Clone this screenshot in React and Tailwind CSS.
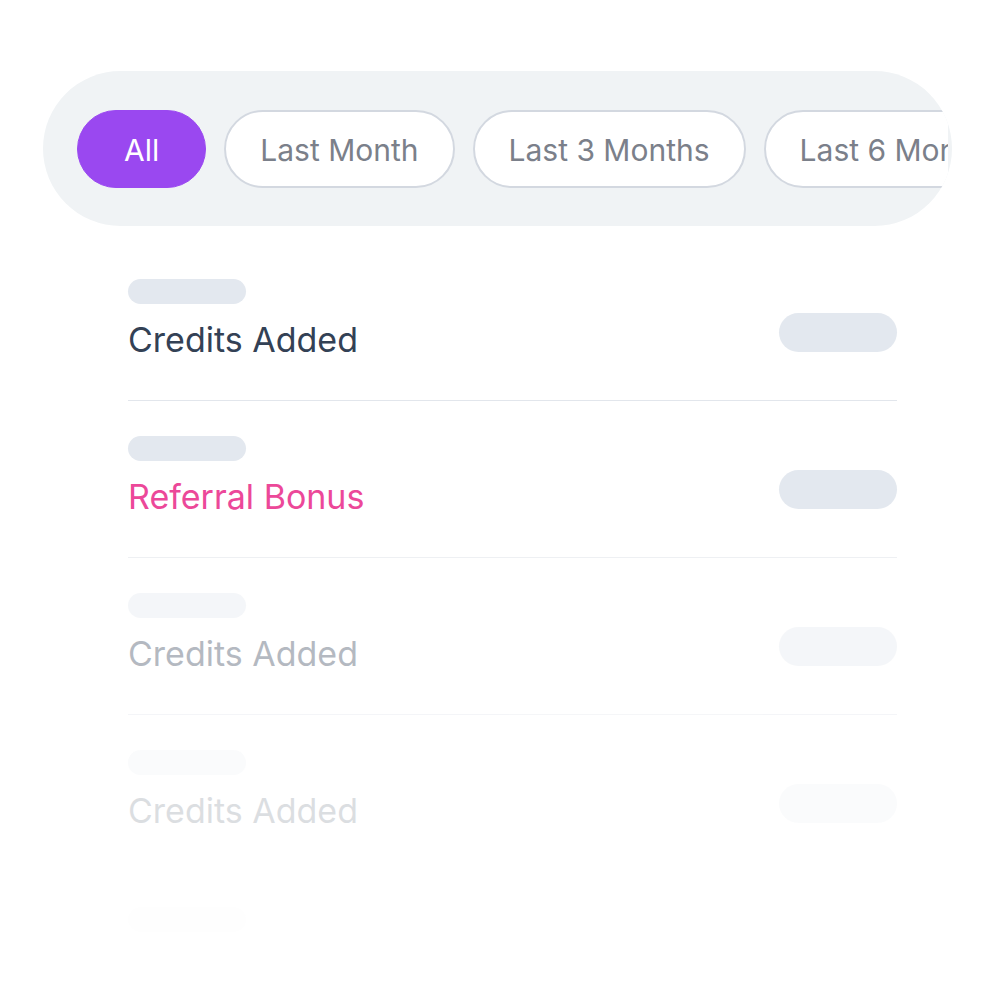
import React, { useState } from 'react';

const filters = ['All', 'Last Month', 'Last 3 Months', 'Last 6 Months'];

const rows = [
  { title: 'Credits Added', color: 'text-[#334155]', fade: 'opacity-100', line: 'border-[#e2e6ec]' },
  { title: 'Referral Bonus', color: 'text-[#ec4899]', fade: 'opacity-100', line: 'border-[#eef0f3]' },
  { title: 'Credits Added', color: 'text-[#334155]', fade: 'opacity-[0.36]', line: 'border-[#e2e6ec]' },
  { title: 'Credits Added', color: 'text-[#334155]', fade: 'opacity-[0.17]', line: 'border-transparent' },
];

function App() {
  const [active, setActive] = useState('All');

  return (
    <div
      className="w-[1000px] h-[993px] bg-white overflow-hidden"
      style={{ fontFamily: 'Inter, "Noto Sans", sans-serif' }}
    >
      <div className="ml-[43px] mt-[71px] w-[909px] h-[155px] rounded-full bg-[#f0f3f5] overflow-hidden pl-[34px] pr-[4px] flex items-center">
        <div className="flex gap-[18px] overflow-hidden w-full">
          {filters.map((f) => (
            <button
              key={f}
              onClick={() => setActive(f)}
              className={
                f === active
                  ? 'shrink-0 h-[78px] px-[46px] pt-[3px] rounded-full bg-[#9a48f0] text-white text-[30px] border border-[#9a48f0]'
                  : 'shrink-0 h-[78px] px-[34px] pt-[3px] rounded-full bg-white text-[#7b808a] text-[30px] border-2 border-[#d3d8e0]'
              }
            >
              {f}
            </button>
          ))}
        </div>
      </div>

      <div className="ml-[128px] w-[769px] mt-[18px]">
        {rows.map((r, i) => (
          <div key={i} className={r.fade}>
            <div className={'pt-[35px] pb-[40px] border-b ' + r.line + ' flex justify-between'}>
              <div>
                <div className="w-[118px] h-[25px] rounded-full bg-[#e3e8ef]" />
                <div className={'mt-[16px] text-[34px] leading-[40px] ' + r.color}>{r.title}</div>
              </div>
              <div className="pt-[34px]">
                <div className="w-[118px] h-[39px] rounded-full bg-[#e3e8ef]" />
              </div>
            </div>
          </div>
        ))}
        <div className="opacity-[0.05] pt-[35px]">
          <div className="w-[118px] h-[25px] rounded-full bg-[#e3e8ef]" />
        </div>
      </div>
    </div>
  );
}

export default App;
